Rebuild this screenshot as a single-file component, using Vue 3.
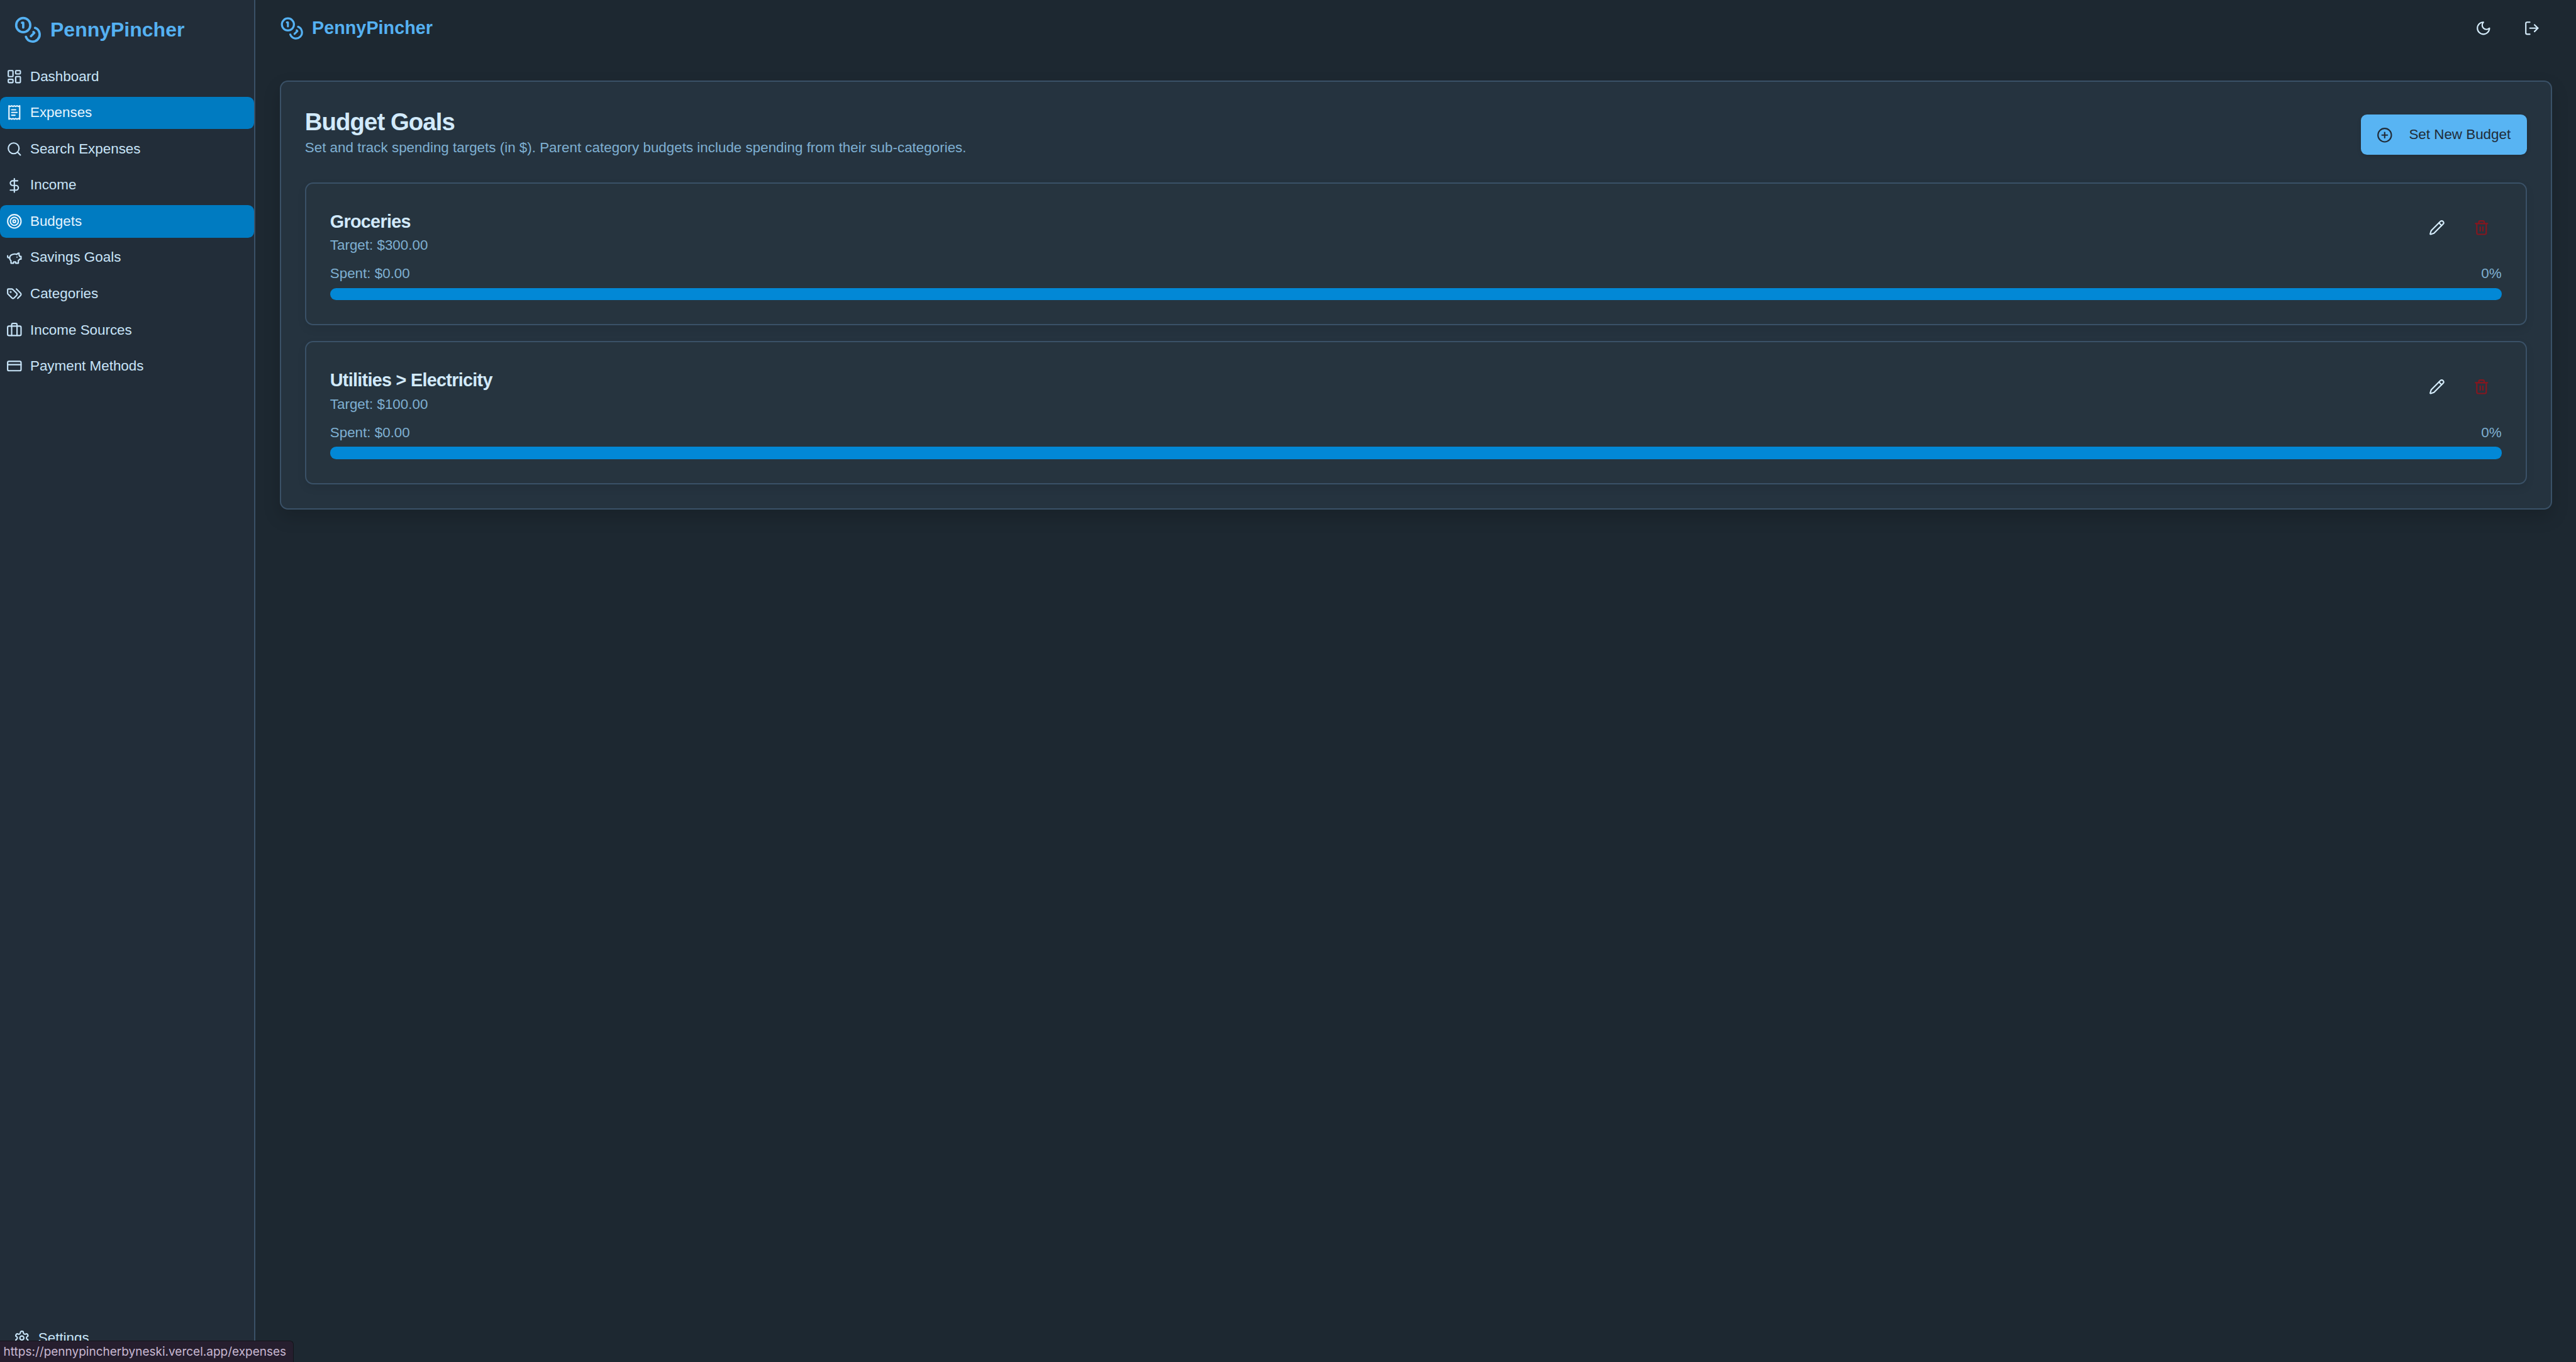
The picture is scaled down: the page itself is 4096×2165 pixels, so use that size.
<script setup>
import { h } from 'vue'

const p = (d) => ['path', { d }]
const c = (cx, cy, r, extra = {}) => ['circle', { cx, cy, r, ...extra }]
const r = (x, y, width, height, rx) => ['rect', { x, y, width, height, rx }]

const icons = {
  coins: [c(8, 8, 6), p('M18.09 10.37A6 6 0 1 1 10.34 18'), p('M7 6h1v4'), p('m16.71 13.88.7.71-2.82 2.82')],
  dashboard: [r(3, 3, 7, 9, 1), r(14, 3, 7, 5, 1), r(14, 12, 7, 9, 1), r(3, 16, 7, 5, 1)],
  receipt: [p('M4 2v20l2-1 2 1 2-1 2 1 2-1 2 1 2-1 2 1V2l-2 1-2-1-2 1-2-1-2 1-2-1-2 1Z'), p('M14 8H8'), p('M16 12H8'), p('M13 16H8')],
  search: [c(11, 11, 8), p('m21 21-4.3-4.3')],
  dollar: [p('M12 2v20'), p('M17 5H9.5a3.5 3.5 0 0 0 0 7h5a3.5 3.5 0 0 1 0 7H6')],
  target: [c(12, 12, 10), c(12, 12, 6), c(12, 12, 2)],
  piggy: [p('M19 5c-1.5 0-2.8 1.4-3 2-3.5-1.5-11-.3-11 5 0 1.8 0 3 2 4.5V20h4v-2h3v2h4v-4c1-.5 1.7-1 2-2h2v-4h-2c0-1-.5-1.5-1-2V5z'), p('M2 9v1c0 1.1.9 2 2 2h1'), p('M16 11h.01')],
  tags: [p('m15 5 6.3 6.3a2.4 2.4 0 0 1 0 3.4L17 19'), p('M9.586 5.586A2 2 0 0 0 8.172 5H3a1 1 0 0 0-1 1v5.172a2 2 0 0 0 .586 1.414L8.29 18.29a2.426 2.426 0 0 0 3.42 0l3.58-3.58a2.426 2.426 0 0 0 0-3.42z'), c(6.5, 9.5, 0.5, { fill: 'currentColor' })],
  briefcase: [p('M16 20V4a2 2 0 0 0-2-2h-4a2 2 0 0 0-2 2v16'), r(2, 6, 20, 14, 2)],
  card: [r(2, 5, 20, 14, 2), p('M2 10h20')],
  settings: [p('M12.22 2h-.44a2 2 0 0 0-2 2v.18a2 2 0 0 1-1 1.73l-.43.25a2 2 0 0 1-2 0l-.15-.08a2 2 0 0 0-2.73.73l-.22.38a2 2 0 0 0 .73 2.73l.15.1a2 2 0 0 1 1 1.72v.51a2 2 0 0 1-1 1.74l-.15.09a2 2 0 0 0-.73 2.73l.22.38a2 2 0 0 0 2.73.73l.15-.08a2 2 0 0 1 2 0l.43.25a2 2 0 0 1 1 1.73V20a2 2 0 0 0 2 2h.44a2 2 0 0 0 2-2v-.18a2 2 0 0 1 1-1.73l.43-.25a2 2 0 0 1 2 0l.15.08a2 2 0 0 0 2.73-.73l.22-.39a2 2 0 0 0-.73-2.73l-.15-.08a2 2 0 0 1-1-1.74v-.5a2 2 0 0 1 1-1.74l.15-.09a2 2 0 0 0 .73-2.73l-.22-.38a2 2 0 0 0-2.73-.73l-.15.08a2 2 0 0 1-2 0l-.43-.25a2 2 0 0 1-1-1.73V4a2 2 0 0 0-2-2z'), c(12, 12, 3)],
  moon: [p('M12 3a6 6 0 0 0 9 9 9 9 0 1 1-9-9Z')],
  logout: [p('M9 21H5a2 2 0 0 1-2-2V5a2 2 0 0 1 2-2h4'), p('m16 17 5-5-5-5'), p('M21 12H9')],
  plus: [c(12, 12, 10), p('M8 12h8'), p('M12 8v8')],
  pencil: [p('M21.174 6.812a1 1 0 0 0-3.986-3.987L3.842 16.174a2 2 0 0 0-.5.83l-1.321 4.352a.5.5 0 0 0 .623.622l4.353-1.32a2 2 0 0 0 .83-.497z'), p('m15 5 4 4')],
  trash: [p('M3 6h18'), p('M19 6v14a2 2 0 0 1-2 2H7a2 2 0 0 1-2-2V6'), p('M8 6V4a2 2 0 0 1 2-2h4a2 2 0 0 1 2 2v2'), p('M10 11v6'), p('M14 11v6')]
}

const Icon = (props) =>
  h(
    'svg',
    {
      class: 'lucide',
      width: props.size,
      height: props.size,
      viewBox: '0 0 24 24',
      fill: 'none',
      stroke: 'currentColor',
      'stroke-width': 2,
      'stroke-linecap': 'round',
      'stroke-linejoin': 'round'
    },
    icons[props.name].map(([tag, attrs]) => h(tag, attrs))
  )
Icon.props = ['name', 'size']

const nav = [
  { label: 'Dashboard', icon: 'dashboard' },
  { label: 'Expenses', icon: 'receipt', active: true },
  { label: 'Search Expenses', icon: 'search' },
  { label: 'Income', icon: 'dollar' },
  { label: 'Budgets', icon: 'target', active: true },
  { label: 'Savings Goals', icon: 'piggy' },
  { label: 'Categories', icon: 'tags' },
  { label: 'Income Sources', icon: 'briefcase' },
  { label: 'Payment Methods', icon: 'card' }
]

const budgets = [
  { name: 'Groceries', target: 'Target: $300.00', spent: 'Spent: $0.00', pct: '0%' },
  { name: 'Utilities > Electricity', target: 'Target: $100.00', spent: 'Spent: $0.00', pct: '0%' }
]
</script>

<template>
  <div class="app">
    <aside class="sidebar">
      <div class="brand">
        <Icon name="coins" :size="44.8" />
        <span class="brand-name">PennyPincher</span>
      </div>
      <nav class="nav">
        <a v-for="item in nav" :key="item.label" class="nav-item" :class="{ active: item.active }">
          <Icon :name="item.icon" :size="25.6" />
          <span>{{ item.label }}</span>
        </a>
      </nav>
      <div class="foot">
        <a class="nav-item">
          <Icon name="settings" :size="25.6" />
          <span>Settings</span>
        </a>
      </div>
    </aside>

    <main class="main">
      <header class="topbar">
        <div class="top-brand">
          <Icon name="coins" :size="38.4" />
          <span>PennyPincher</span>
        </div>
        <div class="top-actions">
          <button class="icon-btn"><Icon name="moon" :size="25.6" /></button>
          <button class="icon-btn"><Icon name="logout" :size="25.6" /></button>
        </div>
      </header>

      <section class="panel">
        <div class="panel-head">
          <div>
            <h1>Budget Goals</h1>
            <p class="muted">Set and track spending targets (in $). Parent category budgets include spending from their sub-categories.</p>
          </div>
          <button class="primary">
            <Icon name="plus" :size="25.6" />
            <span>Set New Budget</span>
          </button>
        </div>

        <div class="list">
          <article v-for="b in budgets" :key="b.name" class="budget">
            <div class="budget-head">
              <div>
                <h2>{{ b.name }}</h2>
                <p class="muted">{{ b.target }}</p>
              </div>
              <div class="budget-actions">
                <button class="icon-btn"><Icon name="pencil" :size="25.6" /></button>
                <button class="icon-btn danger"><Icon name="trash" :size="25.6" /></button>
              </div>
            </div>
            <div class="spent muted">
              <span>{{ b.spent }}</span>
              <span>{{ b.pct }}</span>
            </div>
            <div class="bar"></div>
          </article>
        </div>
      </section>
    </main>

    <div class="status">https://pennypincherbyneski.vercel.app/expenses</div>
  </div>
</template>

<style scoped>
.app {
  position: relative;
  display: flex;
  height: 2165px;
  overflow: hidden;
  background: #1d2831;
  font-family: "Liberation Sans", Arial, sans-serif;
  color: #d2eafb;
}
.sidebar {
  flex: none;
  box-sizing: border-box;
  width: 406.4px;
  display: flex;
  flex-direction: column;
  background: #222d39;
  border-right: 2px solid #3a5167;
}
.brand {
  height: 96px;
  box-sizing: border-box;
  padding: 0 0 2px 22.4px;
  display: flex;
  align-items: center;
  gap: 12.8px;
  color: #55b1f2;
}
.brand-name {
  margin-top: 1.6px;
  font-size: 32px;
  font-weight: 700;
}
.nav {
  display: flex;
  flex-direction: column;
  gap: 6.4px;
}
.nav-item {
  height: 51.2px;
  padding-left: 9.6px;
  display: flex;
  align-items: center;
  gap: 12.8px;
  border-radius: 9.6px;
  font-size: 22.4px;
  color: #c8e4f8;
}
.nav-item.active {
  background: #007bc1;
  color: #e6f4fd;
}
.foot {
  margin-top: auto;
  padding: 0 12.8px 12.8px;
}
.main {
  flex: 1;
  min-width: 0;
  padding: 0 38.4px;
}
.topbar {
  height: 89.6px;
  display: flex;
  align-items: center;
  justify-content: space-between;
  margin-bottom: 38.4px;
}
.top-brand {
  display: flex;
  align-items: center;
  gap: 12.8px;
  color: #55b1f2;
  font-size: 28.8px;
  font-weight: 700;
}
.top-actions {
  display: flex;
  gap: 12.8px;
}
.icon-btn {
  width: 64px;
  height: 64px;
  padding: 0;
  border: 0;
  background: none;
  display: flex;
  align-items: center;
  justify-content: center;
  color: #d6edfc;
}
.icon-btn.danger {
  color: #85161f;
}
.panel {
  padding: 38px;
  background: #25333f;
  border: 2px solid #3a5167;
  border-radius: 12.8px;
  box-shadow: 0 12px 28px rgba(0, 0, 0, 0.16);
}
.panel-head {
  display: flex;
  justify-content: space-between;
  align-items: flex-start;
  height: 83.2px;
  margin-bottom: 38.4px;
}
h1 {
  margin: 0;
  font-size: 38.4px;
  line-height: 51.2px;
  font-weight: 700;
  letter-spacing: -0.025em;
  color: #d2eafb;
}
h2 {
  margin: 0;
  font-size: 28.8px;
  line-height: 44.8px;
  font-weight: 700;
  letter-spacing: -0.025em;
  color: #d2eafb;
}
.muted {
  margin: 0;
  font-size: 22.4px;
  line-height: 32px;
  color: #7fb0d2;
}
.primary {
  margin-top: 14.4px;
  width: 264px;
  height: 64px;
  padding: 0 25.6px;
  box-sizing: border-box;
  border: 0;
  border-radius: 9.6px;
  background: #58b4f3;
  color: #212c38;
  font: inherit;
  font-size: 22.4px;
  display: flex;
  align-items: center;
  gap: 25.6px;
  white-space: nowrap;
  box-shadow: 0 3px 6px rgba(0, 0, 0, 0.12);
}
.list {
  display: flex;
  flex-direction: column;
  gap: 25.6px;
}
.budget {
  padding: 38px;
  background: #26343f;
  border: 2px solid #3a5167;
  border-radius: 12.8px;
  box-shadow: 0 6px 14px rgba(0, 0, 0, 0.08);
}
.budget-head {
  display: flex;
  justify-content: space-between;
  align-items: flex-start;
}
.budget-actions {
  display: flex;
  gap: 6.4px;
}
.spent {
  display: flex;
  justify-content: space-between;
  margin-top: 12.8px;
  margin-bottom: 6.4px;
}
.bar {
  height: 19.2px;
  border-radius: 9.6px;
  background: #0288d6;
}
.status {
  position: absolute;
  left: 0;
  bottom: 0;
  height: 33.6px;
  box-sizing: border-box;
  padding: 0 11px 0 5.6px;
  display: flex;
  align-items: center;
  background: #261e2e;
  border: solid #14151a;
  border-width: 1px 1px 0 0;
  border-top-right-radius: 6px;
  font-family: Inter, "Liberation Sans", sans-serif;
  font-size: 19px;
  color: #c8b8d2;
}
</style>

<style>
body {
  margin: 0;
  background: #1d2831;
}
.lucide {
  display: block;
  flex: none;
}
</style>
